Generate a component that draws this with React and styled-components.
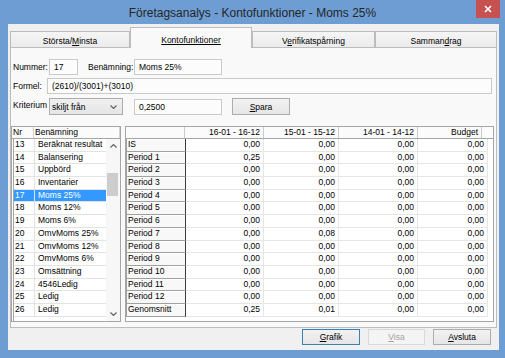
import React from "react";
import styled, { createGlobalStyle } from "styled-components";

const GlobalStyle = createGlobalStyle`
  html, body { margin: 0; padding: 0; }
  body {
    background: #6d9dd3;
    font-family: "Liberation Sans", Arial, sans-serif;
  }
`;

const Window = styled.div`
  width: 505px;
  height: 358px;
  box-sizing: border-box;
  background: #6d9dd3;
  padding: 0 6px 8px 8px;
  display: flex;
  flex-direction: column;
  overflow: hidden;
`;

const TitleBar = styled.div`
  height: 24px;
  margin: 0 -6px 0 -8px;
  display: grid;
  grid-template-columns: 1fr auto 1fr;
  align-items: start;
`;

const Title = styled.div`
  grid-column: 2;
  line-height: 26px;
  font-size: 12px;
  color: #262626;
  white-space: nowrap;
`;

const CloseButton = styled.div`
  grid-column: 3;
  justify-self: end;
  margin-right: 5px;
  width: 24px;
  height: 18px;
  background: #c75050;
  display: flex;
  align-items: center;
  justify-content: center;
`;

const Client = styled.div`
  flex: 1;
  background: #f0f0f0;
  padding: 3px 2px 0 2px;
  display: flex;
  flex-direction: column;
  font-size: 8.5px;
  color: #000;
`;

const TabStrip = styled.div`
  display: flex;
  align-items: flex-end;
  height: 21px;
  margin-bottom: -1px;
  position: relative;
  z-index: 1;
`;

const Tab = styled.div`
  width: ${(p) => p.w}px;
  height: ${(p) => (p.active ? 21 : 17)}px;
  box-sizing: border-box;
  border: 1px solid #bcbcbc;
  border-bottom: ${(p) => (p.active ? "none" : "1px solid #bcbcbc")};
  background: ${(p) =>
    p.active ? "#f9f9f9" : "linear-gradient(#f5f5f5, #ebebeb)"};
  padding-top: ${(p) => (p.active ? 6 : 3)}px;
  line-height: 12px;
  text-align: center;
  white-space: nowrap;
  text-decoration: ${(p) => (p.active ? "underline" : "none")};
`;

const Panel = styled.div`
  height: 281px;
  box-sizing: border-box;
  border: 1px solid #bcbcbc;
  background: #f9f9f9;
  padding: 11px 0 5px 0;
  display: flex;
  flex-direction: column;
`;

const FormRow = styled.div`
  display: flex;
  align-items: center;
  height: ${(p) => p.h || 16}px;
  margin-bottom: ${(p) => p.mb || 0}px;
  padding: 0 4px 0 2px;
`;

const Label = styled.div`
  width: ${(p) => p.w}px;
  margin-left: ${(p) => p.ml || 0}px;
  white-space: nowrap;
  align-self: ${(p) => (p.top ? "flex-start" : "center")};
  line-height: 14px;
`;

const Field = styled.div`
  width: ${(p) => (p.w ? `${p.w}px` : "auto")};
  flex: ${(p) => (p.w ? "none" : 1)};
  margin-left: ${(p) => p.ml || 0}px;
  height: 16px;
  box-sizing: border-box;
  border: 1px solid #c9c9c9;
  background: #fcfcfc;
  padding: 0 4px;
  line-height: 14px;
  white-space: nowrap;
  overflow: hidden;
`;

const Select = styled.div`
  width: 74px;
  height: 17px;
  box-sizing: border-box;
  border: 1px solid #acacac;
  background: linear-gradient(#f0f0f0, #e5e5e5);
  padding: 0 5px 0 2px;
  display: flex;
  align-items: center;
  justify-content: space-between;
  white-space: nowrap;
`;

const Button = styled.button`
  width: ${(p) => p.w}px;
  height: ${(p) => p.h || 16}px;
  margin-left: ${(p) => p.ml || 0}px;
  box-sizing: border-box;
  padding: 0;
  font-family: inherit;
  font-size: 8.5px;
  color: ${(p) => (p.disabled ? "#a3a3a3" : "#000")};
  border: 1px solid
    ${(p) => (p.focus ? "#3c7fb1" : p.disabled ? "#d9d9d9" : "#acacac")};
  background: ${(p) =>
    p.disabled ? "#f4f4f4" : "linear-gradient(#f2f2f2, #e6e6e6)"};
  border-radius: 0;
`;

const Lists = styled.div`
  flex: 1;
  display: flex;
  gap: 4px;
  padding-right: 2px;
  min-height: 0;
`;

const ListBox = styled.div`
  width: 110px;
  box-sizing: border-box;
  border: 1px solid #a5a5a5;
  background: #fff;
  display: flex;
  flex-direction: column;
`;

const ListHeader = styled.div`
  display: grid;
  grid-template-columns: 22px 1fr;
  height: 12px;
  box-sizing: border-box;
  border-bottom: 1px solid #a5a5a5;
  background: #fbfbfb;
`;

const HeadCell = styled.div`
  line-height: 11px;
  padding-left: 1px;
  border-right: 1px solid #d2d2d2;
  white-space: nowrap;
  overflow: hidden;
`;

const ListBody = styled.div`
  flex: 1;
  display: flex;
  min-height: 0;
  margin-left: 1px;
  border-left: 1px solid #a5a5a5;
`;

const ListRows = styled.div`
  flex: 1;
  min-width: 0;
`;

const ListRow = styled.div`
  display: grid;
  grid-template-columns: 21px 1fr;
  height: 12.7px;
  box-sizing: border-box;
  border-bottom: 1px solid #e3e3e3;
  background: ${(p) => (p.selected ? "#3399ff" : "transparent")};
  color: ${(p) => (p.selected ? "#fff" : "#000")};
`;

const ListCell = styled.div`
  line-height: 11.7px;
  padding-left: ${(p) => (p.first ? 1 : 3)}px;
  border-right: ${(p) => (p.first ? "1px solid #e3e3e3" : "none")};
  white-space: nowrap;
  overflow: hidden;
`;

const ScrollBar = styled.div`
  width: 14px;
  background: #f7f7f7;
  display: flex;
  flex-direction: column;
`;

const ScrollArrow = styled.div`
  height: 14px;
  display: flex;
  align-items: center;
  justify-content: center;
`;

const ScrollTrack = styled.div`
  flex: 1;
`;

const ScrollThumb = styled.div`
  margin: 20px 2px 0 1px;
  height: 23px;
  background: #cdcdcd;
`;

const Grid = styled.div`
  flex: 1;
  box-sizing: border-box;
  border: 1px solid #a5a5a5;
  background: #fff;
  display: flex;
  flex-direction: column;
`;

const GridHeader = styled.div`
  display: grid;
  grid-template-columns: 59px 79px 75px 79px 64px 1fr;
  height: 12px;
  box-sizing: border-box;
  border-bottom: 1px solid #a5a5a5;
  background: #fbfbfb;
`;

const GridHeadCell = styled.div`
  border-right: ${(p) => (p.last ? "none" : "1px solid #cacaca")};
  text-align: right;
  padding-right: 3px;
  line-height: 11px;
  white-space: nowrap;
`;

const GridRow = styled.div`
  display: grid;
  grid-template-columns: 60px 78px 75px 79px 70px 1fr;
  height: 12.7px;
`;

const NameCell = styled.div`
  box-sizing: border-box;
  background: #f8f8f8;
  border-left: 1px solid #a0a0a0;
  border-right: 1px solid #3a3a3a;
  border-bottom: 1px solid #a0a0a0;
  box-shadow: inset 0 1px 0 #fff;
  padding-left: 1px;
  line-height: 11.7px;
  white-space: nowrap;
  overflow: hidden;
`;

const ValueCell = styled.div`
  box-sizing: border-box;
  border-bottom: 1px solid #e6e6e6;
  border-right: 1px solid #e6e6e6;
  text-align: right;
  padding-right: 3px;
  line-height: 11.7px;
`;

const BlankCell = styled.div``;

const ButtonBar = styled.div`
  display: flex;
  justify-content: flex-end;
  gap: 8px;
  margin-top: 1px;
  padding-right: 6px;
`;

const Chevron = ({ up }) => (
  <svg width="7" height="4" viewBox="0 0 7 4">
    <path
      d={up ? "M0.5 3.5L3.5 0.6L6.5 3.5" : "M0.5 0.5L3.5 3.4L6.5 0.5"}
      stroke="#606060"
      strokeWidth="1.2"
      fill="none"
    />
  </svg>
);

const accounts = [
  ["13", "Beräknat resultat"],
  ["14", "Balansering"],
  ["15", "Uppbörd"],
  ["16", "Inventarier"],
  ["17", "Moms 25%"],
  ["18", "Moms 12%"],
  ["19", "Moms 6%"],
  ["20", "OmvMoms 25%"],
  ["21", "OmvMoms 12%"],
  ["22", "OmvMoms 6%"],
  ["23", "Omsättning"],
  ["24", "4546Ledig"],
  ["25", "Ledig"],
  ["26", "Ledig"],
];

const periodNames = [
  "IS",
  ...Array.from({ length: 12 }, (_, i) => `Period ${i + 1}`),
  "Genomsnitt",
];

const values = periodNames.map((name) => {
  const row = ["0,00", "0,00", "0,00", "0,00"];
  if (name === "Period 1") row[0] = "0,25";
  if (name === "Genomsnitt") {
    row[0] = "0,25";
    row[1] = "0,01";
  }
  if (name === "Period 7") row[1] = "0,08";
  return row;
});

export default function App() {
  return (
    <>
      <GlobalStyle />
      <Window>
        <TitleBar>
          <Title>Företagsanalys - Kontofunktioner - Moms 25%</Title>
          <CloseButton>
            <svg width="8" height="8" viewBox="0 0 8 8">
              <path d="M1 1L7 7M7 1L1 7" stroke="#fff" strokeWidth="1.6" />
            </svg>
          </CloseButton>
        </TitleBar>

        <Client>
          <TabStrip>
            <Tab w={120}>
              Största/<u>M</u>insta
            </Tab>
            <Tab w={122} active>
              Kontofunktioner
            </Tab>
            <Tab w={123}>
              V<u>e</u>rifikatspårning
            </Tab>
            <Tab w={122}>
              Samman<u>d</u>rag
            </Tab>
          </TabStrip>

          <Panel>
            <FormRow mb={3}>
              <Label w={36}>Nummer:</Label>
              <Field w={29}>17</Field>
              <Label w={46} ml={10}>
                Benämning:
              </Label>
              <Field w={88}>Moms 25%</Field>
            </FormRow>
            <FormRow mb={4}>
              <Label w={34}>Formel:</Label>
              <Field>(2610)/(3001)+(3010)</Field>
            </FormRow>
            <FormRow h={17} mb={11}>
              <Label w={36} top>
                Kriterium
              </Label>
              <Select>
                skiljt från
                <Chevron />
              </Select>
              <Field w={88} ml={11}>
                0,2500
              </Field>
              <Button w={58} h={17} ml={10}>
                <u>S</u>para
              </Button>
            </FormRow>

            <Lists>
              <ListBox>
                <ListHeader>
                  <HeadCell>Nr</HeadCell>
                  <HeadCell>Benämning</HeadCell>
                </ListHeader>
                <ListBody>
                  <ListRows>
                    {accounts.map(([nr, name]) => (
                      <ListRow key={nr} selected={nr === "17"}>
                        <ListCell first>{nr}</ListCell>
                        <ListCell>{name}</ListCell>
                      </ListRow>
                    ))}
                  </ListRows>
                  <ScrollBar>
                    <ScrollArrow>
                      <Chevron up />
                    </ScrollArrow>
                    <ScrollTrack>
                      <ScrollThumb />
                    </ScrollTrack>
                    <ScrollArrow>
                      <Chevron />
                    </ScrollArrow>
                  </ScrollBar>
                </ListBody>
              </ListBox>

              <Grid>
                <GridHeader>
                  <GridHeadCell />
                  <GridHeadCell>16-01 - 16-12</GridHeadCell>
                  <GridHeadCell>15-01 - 15-12</GridHeadCell>
                  <GridHeadCell>14-01 - 14-12</GridHeadCell>
                  <GridHeadCell>Budget</GridHeadCell>
                  <GridHeadCell last />
                </GridHeader>
                {periodNames.map((name, i) => (
                  <GridRow key={name}>
                    <NameCell>{name}</NameCell>
                    {values[i].map((v, j) => (
                      <ValueCell key={j}>{v}</ValueCell>
                    ))}
                    <BlankCell />
                  </GridRow>
                ))}
              </Grid>
            </Lists>
          </Panel>

          <ButtonBar>
            <Button w={58} focus>
              <u>G</u>rafik
            </Button>
            <Button w={57} disabled>
              <u>V</u>isa
            </Button>
            <Button w={58}>
              <u>A</u>vsluta
            </Button>
          </ButtonBar>
        </Client>
      </Window>
    </>
  );
}
